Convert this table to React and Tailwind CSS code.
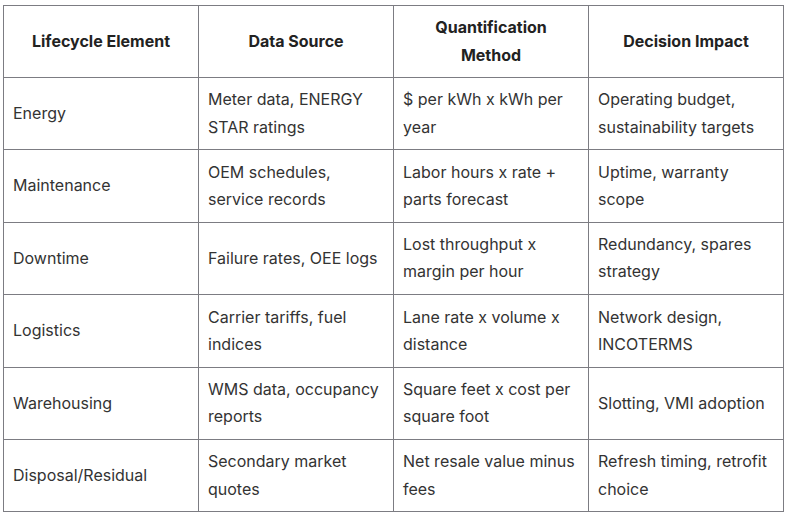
export default function App() {
  const rows = [
    ["Energy", "Meter data, ENERGY STAR ratings", "$ per kWh x kWh per year", "Operating budget, sustainability targets"],
    ["Maintenance", "OEM schedules, service records", "Labor hours x rate + parts forecast", "Uptime, warranty scope"],
    ["Downtime", "Failure rates, OEE logs", "Lost throughput x margin per hour", "Redundancy, spares strategy"],
    ["Logistics", "Carrier tariffs, fuel indices", "Lane rate x volume x distance", "Network design, INCOTERMS"],
    ["Warehousing", "WMS data, occupancy reports", "Square feet x cost per square foot", "Slotting, VMI adoption"],
    ["Disposal/Residual", "Secondary market quotes", "Net resale value minus fees", "Refresh timing, retrofit choice"],
  ];
  const headers = ["Lifecycle Element", "Data Source", "Quantification Method", "Decision Impact"];
  return (
    <div className="w-[790px] h-[516px] bg-white pt-[5px] pl-[3px]" style={{ fontFamily: "Inter, 'Noto Sans', sans-serif" }}>
      <table className="w-[781px] table-fixed border-collapse text-[16px] leading-[27.2px]">
        <thead>
          <tr className="h-[72px]">
            {headers.map((h) => (
              <th key={h} className="border border-[#7c7c82] px-[12px] py-[8px] text-center font-bold text-[#222222]">
                {h}
              </th>
            ))}
          </tr>
        </thead>
        <tbody>
          {rows.map((r) => (
            <tr key={r[0]} className="h-[72.4px]">
              {r.map((c, i) => (
                <td key={i} className="border border-[#7c7c82] pl-[9px] pr-[10px] py-[8px] align-middle text-[#333333]">
                  {c}
                </td>
              ))}
            </tr>
          ))}
        </tbody>
      </table>
    </div>
  );
}
